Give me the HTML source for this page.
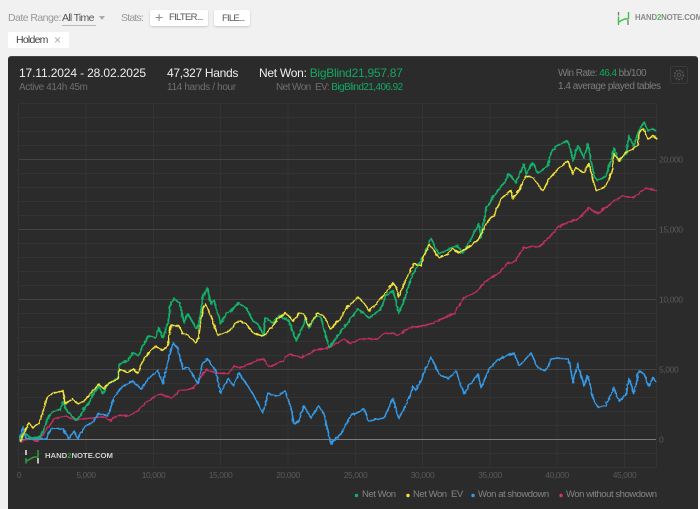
<!DOCTYPE html>
<html><head><meta charset="utf-8"><style>
html,body{margin:0;padding:0;width:700px;height:509px;overflow:hidden;background:#f1f1f1;font-family:"Liberation Sans",sans-serif}
.t{position:absolute;white-space:nowrap;line-height:14px}
.btn{position:absolute;background:#fff;border-radius:2px;box-shadow:0 1px 2px rgba(0,0,0,.18)}
#panel{position:absolute;left:8px;top:56px;width:690px;height:453px;background:#2b2b2b;border-radius:3px 3px 0 0;border-top:1px solid #444;box-sizing:border-box}
svg{position:absolute;left:0;top:0}
.ax{font-size:8.500px;fill:#5a5a5a;font-family:"Liberation Sans",sans-serif;letter-spacing:-.4px}
.lg{font-size:9.500px;color:#858585;letter-spacing:-.45px}
</style></head><body>
<div class="t" style="left:8px;top:11px;font-size:10.500px;letter-spacing:-.55px;color:#999">Date Range:</div>
<div class="t" style="left:62px;top:11px;font-size:10.500px;letter-spacing:-.7px;color:#555;border-bottom:1px solid #bbb;padding-bottom:0;width:34px">All Time</div>
<div style="position:absolute;left:99px;top:16px;border:3.500px solid transparent;border-top:4px solid #aaa"></div>
<div class="t" style="left:121px;top:11px;font-size:10.500px;letter-spacing:-.8px;color:#999">Stats:</div>
<div class="btn" style="left:150px;top:10px;width:58px;height:16px"></div>
<div class="t" style="left:155px;top:10px;font-size:14px;color:#888">+</div>
<div class="t" style="left:169px;top:11px;font-size:9.500px;letter-spacing:-.7px;color:#555">FILTER...</div>
<div class="btn" style="left:214px;top:10px;width:36px;height:16px"></div>
<div class="t" style="left:222px;top:12px;font-size:9.500px;letter-spacing:-.8px;color:#555">FILE...</div>
<div class="btn" style="left:8px;top:32px;width:61px;height:16px;box-shadow:none"></div>
<div class="t" style="left:16px;top:33px;font-size:10.500px;letter-spacing:-.75px;color:#444">Holdem</div>
<div class="t" style="left:54px;top:33px;font-size:12px;color:#aaa">×</div>

<svg width="700" height="40" style="z-index:2"><path d="M618.500 12v3.500M628 20v5" stroke="#777" stroke-width="1.300"/><path d="M618.500 16.500v8.500M618.500 22.500l2-1.500 4-2H628.500M628.500 12v7" stroke="#3fc04a" stroke-width="1.400" fill="none"/></svg>
<div class="t" style="left:635px;top:11px;font-size:7.800px;letter-spacing:-.15px;font-weight:bold;color:#8a8a8a">HAND<span style="color:#4bbf55">2</span>NOTE.COM</div>

<div id="panel"></div>
<svg width="700" height="509" viewBox="0 0 700 509">
<defs><filter id="j" x="0" y="0" width="700" height="509" filterUnits="userSpaceOnUse"><feTurbulence type="turbulence" baseFrequency="0.18" numOctaves="1" seed="4"/><feDisplacementMap in="SourceGraphic" scale="2.500" xChannelSelector="R" yChannelSelector="G"/></filter></defs>
<g stroke="#333" stroke-width="1">
<path d="M19 103.500H656M19 117.500H656M19 131.500H656M19 145.500H656M19 173.500H656M19 187.500H656M19 201.500H656M19 215.500H656M19 243.500H656M19 257.500H656M19 271.500H656M19 285.500H656M19 313.500H656M19 327.500H656M19 341.500H656M19 355.500H656M19 383.500H656M19 397.500H656M19 411.500H656M19 425.500H656M19 453.500H656M19 467.500H656"/>
<path d="M18.500 103V467M86 103V467M153.500 103V467M220.500 103V467M288 103V467M355.500 103V467M422.500 103V467M490 103V467M557 103V467M624.500 103V467M656.500 103V467"/>
</g>
<path d="M19 159.500H656M19 229.500H656M19 299.500H656M19 369.500H656" stroke="#444"/>
<path d="M19 439.500H656" stroke="#7c7c7c" stroke-width="1"/>
<g fill="none" stroke-width="1.500" stroke-linejoin="round" filter="url(#j)">
<polyline stroke="#e0306c" stroke-opacity=".85" points="19,441 30,438 37,440 43,433 53,418 65,415 75,419 90,417 102,416 110,420 117,414 127,415 137,410 147,400 160,393 170,397 180,390 193,387 205,369 217,372 228,373 233,365 240,367 257,359 263,358 268,366 283,360 288,353 300,357 315,349 328,347 343,338 350,343 360,338 377,338 383,333 393,332 397,335 408,327 420,325 433,322 443,317 453,313 463,297 477,290 483,282 498,272 507,262 513,262 523,247 540,245 557,227 563,223 578,218 588,207 597,213 613,200 622,195 633,197 645,187 656,190"/>
<polyline stroke="#349ae8" stroke-width="1.600" points="19,440 22,426 25,437 30,438 40,438 45,438 50,428 62,428 68,438 73,430 77,438 83,427 93,420 98,413 107,415 113,397 120,387 132,380 140,388 148,377 157,370 162,383 168,357 172,342 177,348 182,368 188,367 197,383 202,362 207,358 215,370 220,392 227,378 233,385 238,372 250,390 262,412 267,393 277,395 284,390 290,407 293,423 298,420 303,405 310,417 318,405 323,413 330,443 340,433 350,415 363,408 368,420 383,417 392,398 398,417 408,398 412,385 415,390 423,373 430,356 438,373 447,378 455,370 463,393 477,373 480,387 488,368 497,359 513,352 518,365 530,352 537,367 545,370 550,358 557,357 568,358 572,382 577,363 583,385 587,375 592,397 598,407 605,405 613,387 618,400 625,395 628,377 633,393 638,370 643,373 648,385 652,377 656,381"/>
<polyline stroke="#12b06a" stroke-width="1.800" points="19,441 22,432 25,433 30,437 37,437 40,435 43,428 48,415 52,411 60,408 62,401 65,408 68,412 75,419 80,415 83,408 88,402 93,392 98,385 102,393 107,383 117,377 119,363 127,360 132,352 137,355 143,343 148,335 155,337 158,327 162,337 167,322 170,302 173,298 179,302 183,322 187,313 195,327 197,327 202,297 206,287 210,303 213,300 220,323 225,313 230,310 238,302 245,307 252,320 257,323 263,335 264,317 272,322 278,315 288,320 292,330 295,340 300,330 305,317 308,327 315,315 320,317 328,347 337,335 343,327 350,318 357,308 362,312 368,317 380,308 385,295 392,290 395,300 398,312 402,303 407,287 412,273 422,257 430,238 438,253 450,247 457,245 462,253 470,238 478,223 480,237 485,208 493,195 503,182 508,173 515,182 523,163 525,173 532,162 537,172 547,165 550,152 556,145 567,140 569,147 572,160 577,145 583,157 587,143 593,175 597,180 605,175 610,160 613,147 618,160 625,153 628,135 633,145 637,132 643,121 647,130 652,128 656,130"/>
<polyline stroke="#f3e63c" points="19,441 23,433 28,422 32,427 38,423 42,410 46,397 52,392 62,390 64,403 72,398 77,403 83,400 92,390 98,383 103,388 108,382 117,379 119,368 127,372 132,368 137,372 143,358 150,350 155,345 162,350 167,343 170,325 178,325 182,333 188,335 195,342 197,340 202,307 205,303 212,320 217,335 228,330 238,320 245,323 252,332 262,335 268,330 277,318 285,312 292,320 298,313 303,313 308,325 317,312 323,315 330,328 340,317 345,308 350,303 357,296 363,302 368,310 380,298 385,292 392,282 395,286 398,296 403,283 408,273 413,263 420,265 423,255 429,243 438,257 447,253 452,248 458,252 470,245 478,238 487,220 493,215 500,198 510,190 512,198 518,190 525,175 532,177 542,190 548,178 557,168 567,160 572,173 575,167 583,172 588,163 592,180 596,190 605,185 612,168 613,153 618,160 625,152 637,145 638,132 643,128 647,138 652,135 656,138"/>
</g>
<g text-anchor="middle">
<text x="19" y="478" class="ax">0</text><text x="86" y="478" class="ax">5,000</text><text x="153.500" y="478" class="ax">10,000</text><text x="220.500" y="478" class="ax">15,000</text><text x="288" y="478" class="ax">20,000</text><text x="355.500" y="478" class="ax">25,000</text><text x="422.500" y="478" class="ax">30,000</text><text x="490" y="478" class="ax">35,000</text><text x="557" y="478" class="ax">40,000</text><text x="624.500" y="478" class="ax">45,000</text>
</g>
<g><text x="659" y="162.500" class="ax">20,000</text><text x="659" y="232.500" class="ax">15,000</text><text x="659" y="302.500" class="ax">10,000</text><text x="659" y="372.500" class="ax">5,000</text><text x="659" y="442.500" class="ax">0</text></g>
<path d="M26 450v5M38 458v5.500" stroke="#ddd" stroke-width="1.600"/>
<path d="M26 458v5.500M26 461.500l5-3 3-1.500h4.500M38 450v6.500" stroke="#2e9a3c" stroke-width="1.600" fill="none"/>
<circle cx="356.500" cy="495.500" r="1.700" fill="#12b06a"/><circle cx="408" cy="495.500" r="1.700" fill="#f3e63c"/><circle cx="473" cy="495.500" r="1.700" fill="#349ae8"/><circle cx="561" cy="495.500" r="1.700" fill="#e0306c"/>
<rect x="670.500" y="66.500" width="17" height="17" rx="2" fill="none" stroke="#3a3a3a"/>
<circle cx="679" cy="75" r="4.500" fill="none" stroke="#555" stroke-width="1.500" stroke-dasharray="2 1"/><circle cx="679" cy="75" r="1.800" fill="none" stroke="#555"/>
</svg>
<div class="t" style="left:45px;top:449px;font-size:7.700px;font-weight:bold;color:#cfcfcf">HAND<span style="color:#2e9a3c">2</span>NOTE.COM</div>

<div class="t" style="left:19px;top:66px;font-size:12px;letter-spacing:-.13px;color:#eee">17.11.2024 - 28.02.2025</div>
<div class="t" style="left:19px;top:81px;font-size:10px;letter-spacing:-.4px;color:#6f6f6f">Active 414h 45m</div>
<div class="t" style="left:167px;top:66px;font-size:12px;letter-spacing:-.3px;color:#eee">47,327 Hands</div>
<div class="t" style="left:167px;top:81px;font-size:10px;letter-spacing:-.35px;color:#6f6f6f">114 hands / hour</div>
<div class="t" style="left:259px;top:66px;font-size:12px;letter-spacing:-.27px;color:#eee">Net Won: <span style="color:#12a862">BigBlind21,957.87</span></div>
<div class="t" style="left:276px;top:81px;font-size:10px;letter-spacing:-.58px;color:#6f6f6f">Net Won&nbsp; EV: <span style="color:#12a862">BigBlind21,406.92</span></div>
<div class="t" style="left:558px;top:67px;font-size:10px;letter-spacing:-.55px;color:#7d7d7d">Win Rate: <span style="color:#12a862">46.4</span> bb/100</div>
<div class="t" style="left:558px;top:80px;font-size:10px;letter-spacing:-.48px;color:#7d7d7d">1.4 average played tables</div>
<div class="t lg" style="left:362px;top:488px">Net Won</div>
<div class="t lg" style="left:413px;top:488px">Net Won&nbsp; EV</div>
<div class="t lg" style="left:478px;top:488px">Won at showdown</div>
<div class="t lg" style="left:566px;top:488px">Won without showdown</div>
</body></html>
